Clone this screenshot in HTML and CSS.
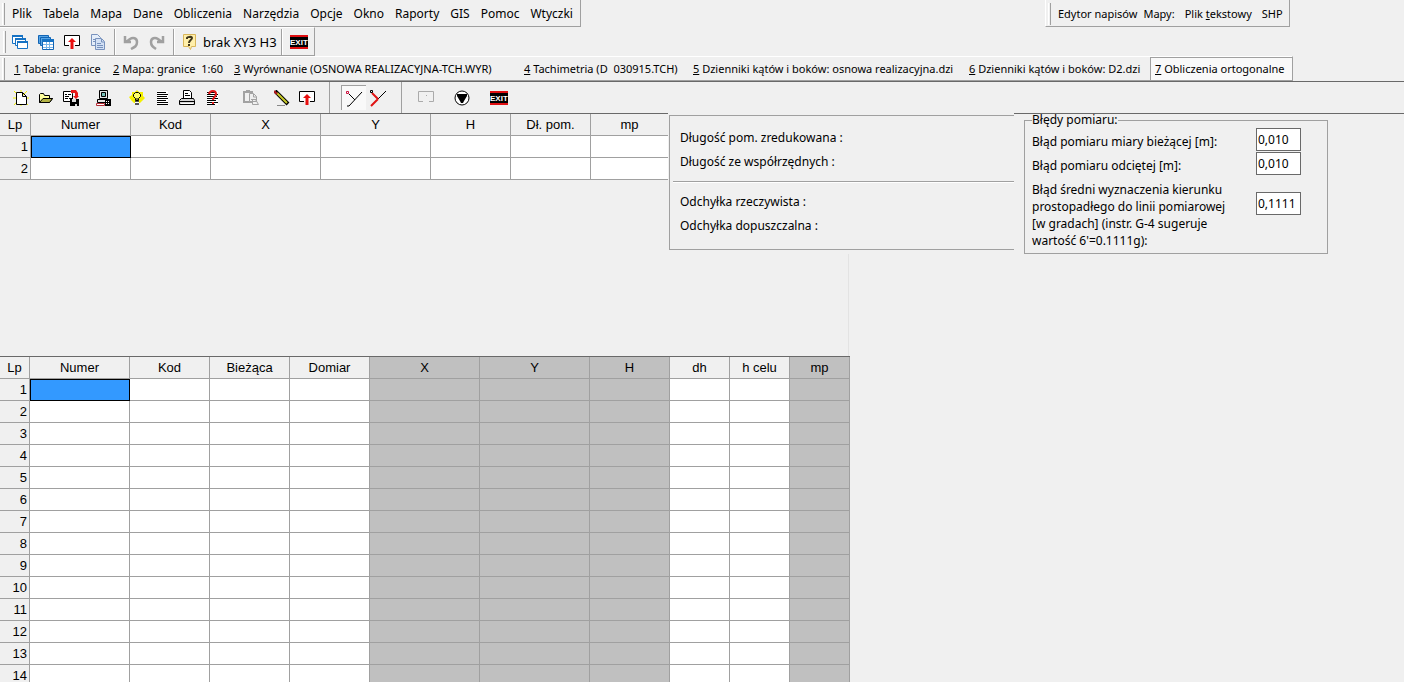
FILE: index.html
```html
<!DOCTYPE html>
<html lang="pl">
<head>
<meta charset="utf-8">
<title>Obliczenia ortogonalne</title>
<link rel="stylesheet" href="styles.css">
</head>
<body>
<svg class="defs" aria-hidden="true">
  <defs>
    <symbol id="exit" viewBox="0 0 18 14">
      <path fill="#e00f12" d="M0 0h18v14H0z"/><path fill="#000" d="M0 2h18v10H0z"/>
      <text x="0" y="10" class="exit-text">EXIT</text>
    </symbol>
    <symbol id="up" viewBox="0 0 16 16">
      <path fill="#fff" d="M1 2h14v9H1z"/>
      <path fill="none" stroke="#000" d="M5 11.500H.5v-10h15v10H11"/>
      <path fill="#e81010" d="M8 4l4 4H9.500v7h-3V8H4z"/>
    </symbol>
  </defs>
</svg>
<header>
  <div class="row">
    <nav class="bar menu">
      <i class="grip"></i>
      <button>Plik</button><button>Tabela</button><button>Mapa</button><button>Dane</button><button>Obliczenia</button><button>Narzędzia</button><button>Opcje</button><button>Okno</button><button>Raporty</button><button>GIS</button><button>Pomoc</button><button>Wtyczki</button>
    </nav>
    <div class="bar captions">
      <i class="grip"></i>
      <span>Edytor napisów</span><span>Mapy:</span><button>Plik <u>t</u>ekstowy</button><button>SHP</button>
    </div>
  </div>
  <div class="row">
    <div class="bar tools">
      <i class="grip"></i>
      <button aria-label="Okna"><svg viewBox="0 0 16 16"><g fill="#fff" stroke="#1672c4"><path d="M.5 1.500h10v8H.5z"/><path d="M3.500 4.500h10v7h-10z"/><path d="M5.500 7.500h10v7h-10z"/></g><path stroke="#1672c4" stroke-width="2" d="M0 2h11M3 5h11M5 8h11"/></svg></button>
      <button aria-label="Tabele"><svg viewBox="0 0 16 16"><g fill="#56a5e6" stroke="#1264b4"><path d="M.5 1.500h10v8H.5z"/><path d="M2.500 3.500h10v8h-10z"/><path fill="#fff" d="M4.500 5.500h11v10h-11z"/></g><path fill="#1672c4" d="M4 5h12v3H4z"/><path stroke="#78b4e8" d="M5 10.500h10M5 13.500h10M8.500 8v7M11.500 8v7"/></svg></button>
      <button aria-label="Wyślij"><svg><use href="#up"/></svg></button>
      <button aria-label="Kopiuj"><svg viewBox="0 0 16 16"><g fill="#e4edf9" stroke="#7892bd"><path d="M1.500.5h6l3 3v8h-9z"/><path fill="#d3e1f5" d="M5.500 4.500h6l3 3v8h-9z"/></g><path fill="none" stroke="#7892bd" d="M11.500 5v3H14M7 9.500h4M7 11.500h6M7 13.500h6M3 5.500h2M3 7.500h2"/></svg></button>
      <i class="sep"></i>
      <button aria-label="Cofnij"><svg viewBox="0 0 16 16"><path fill="none" stroke="#a0a0a0" stroke-width="2.500" d="M2 2v6h6M3 8l4-3c3-2 7-1 7 3s-2 5-6 7"/></svg></button>
      <button aria-label="Ponów"><svg viewBox="0 0 16 16"><path fill="none" stroke="#a0a0a0" stroke-width="2.500" d="M14 2v6H8M13 8L9 5C6 3 2 4 2 8s2 5 5 7"/></svg></button>
      <i class="sep"></i>
      <button class="status"><svg viewBox="0 0 16 16"><path fill="#ffefaa" stroke="#d9b65a" d="M1.500.5h12v12h-4l-1 3-2-3h-5z"/><path fill="none" stroke="#40371c" stroke-width="2" d="M5 5V4c0-1 5-2 5 0 0 2-3 2-3 5M7 10v2"/></svg><span>brak XY3 H3</span></button>
      <i class="sep"></i>
      <button aria-label="Zamknij"><svg class="exit"><use href="#exit"/></svg></button>
    </div>
  </div>
  <nav class="bar tabs">
    <i class="grip"></i>
    <a href="#"><u>1</u> Tabela: granice</a><a href="#"><u>2</u> Mapa: granice&nbsp; 1:60</a><a href="#"><u>3</u> Wyrównanie (OSNOWA REALIZACYJNA-TCH.WYR)</a><a href="#"><u>4</u> Tachimetria (D&nbsp; 030915.TCH)</a><a href="#"><u>5</u> Dzienniki kątów i boków: osnowa realizacyjna.dzi</a><a href="#"><u>6</u> Dzienniki kątów i boków: D2.dzi</a><a href="#" class="active" aria-current="page"><u>7</u> Obliczenia ortogonalne</a>
  </nav>
</header>
<main>
  <div class="toolbar">
    <div class="group">
      <button aria-label="Nowy"><svg viewBox="0 0 16 16"><path stroke="#f4f000" d="M1 1l14 14M14 1L1 15M8 0v16M0 8h16"/><path fill="#fff" stroke="#000" d="M3.500 2.500h6l4 4v8h-10zM9.500 2.500v4h4"/></svg></button>
      <button aria-label="Otwórz"><svg viewBox="0 0 16 16"><path fill="#ffff9c" stroke="#000" d="M1.500 12.500v-8l1-1h3l1 2h5v3h3l-3 4z"/><path fill="#b2b244" stroke="#000" d="M5 8.500h9.500l-3 4h-10z"/></svg></button>
      <button aria-label="Zapisz"><svg viewBox="0 0 16 16"><path fill="#fff" stroke="#000" d="M.5 1.500h7l2 2v8h-9z"/><path stroke="#000" d="M2 4.500h2M5 4.500h3M2 6.500h4M2 8.500h3M6 8.500h3"/><path fill="#e81818" d="M8 0h5l2 3v3h1l-3 3-3-3h2V3H8z"/><path d="M7 9h9v7H7z"/><path fill="#ddd" d="M9 9h4v3H9zM12 14h2v2h-2z"/></svg></button>
    </div>
    <div class="group">
      <button aria-label="Transmisja"><svg viewBox="0 0 16 16"><path fill="#e6e6e6" stroke="#000" d="M3.500.5h8v8h-8zM1.500 9.500h13v3h-13z"/><path fill="#77c1b8" stroke="#000" d="M5.500 2.500h4v4h-4z"/><path fill="#fff" stroke="#b52c36" d="M.5 13.500h8v2h-8z"/><path d="M9 9h6v7H9z"/><path stroke="#fff" stroke-dasharray="1 1" d="M10 11.500h4M10 13.500h4"/></svg></button>
    </div>
    <div class="group wide">
      <button aria-label="Podpowiedź"><svg viewBox="0 0 16 16"><path fill="#f4f000" d="M8 0l2 2 4 0 0 4 2 2-3 3-2 2H5L2 10 0 7l3-2V2h3z"/><path fill="#ff6" stroke="#000" d="M6.500 10.500v-2l-2-2v-2l2-2h3l2 2v2l-2 2v2zM8 8v3"/><path fill="#555" d="M6 11h4v4H6z"/><path stroke="#fff" d="M6 12.500h4"/></svg></button>
      <button aria-label="Lista"><svg viewBox="0 0 16 16"><path fill="#fff" d="M3 1h11v14H3z"/><path stroke="#000" d="M3 2.500h9M3 4.500h11M3 6.500h10M3 8.500h11M3 10.500h9M3 12.500h11M3 14.500h11"/></svg></button>
      <button aria-label="Drukuj"><svg viewBox="0 0 16 16"><path fill="#fff" stroke="#000" d="M4.500 8.500v-8h6l2 2v6zM6 3.500h3M6 5.500h5"/><path fill="#d5d5d5" stroke="#000" d="M2.500 8.500h12l1 2v4H.5v-4zM1 11.500h14"/><path stroke="#fff" d="M2 13.500h12"/></svg></button>
      <button aria-label="Pomoc"><svg viewBox="0 0 16 16"><path fill="#fff" d="M3 1h11v14H3z"/><path stroke="#000" d="M3 2.500h9M3 4.500h11M3 6.500h10M3 8.500h11M3 10.500h9M3 12.500h11M3 14.500h8"/><path fill="none" stroke="#e41818" stroke-width="2" d="M5 4c1-4 7-4 7 0 0 3-3 3-3 6M9 12v2"/></svg></button>
    </div>
    <div class="group narrow">
      <button aria-label="Wklej" disabled><svg viewBox="0 0 16 16"><path fill="none" stroke="#a2a2a2" stroke-width="2" d="M1 2h8v10H1zM3 1h4"/><path fill="#eee" stroke="#a2a2a2" d="M6.500 3.500h4l3 3v5h-7z"/><path fill="none" stroke="#a2a2a2" d="M10.500 4v3h3M9.500 14.500v-5h3l3 5h-6M8 9.500h5"/></svg></button>
    </div>
    <div class="group">
      <button aria-label="Edycja"><svg viewBox="0 0 16 16"><path stroke="#000" stroke-width="4" d="M1 1l13 13"/><path stroke="#c8cb29" stroke-width="2" d="M3 3l10 10"/><path stroke="#b31c22" stroke-width="2" d="M0 1l3 3"/><path stroke="#888" d="M3 15.500h8"/></svg></button>
      <button aria-label="Wyślij"><svg><use href="#up"/></svg></button>
    </div>
    <i class="divider"></i>
    <div class="pair">
      <button class="pressed" aria-label="Rzut prostokątny"><svg viewBox="0 0 18 18"><path fill="none" stroke="#000" d="M4 5l6 6M2 17h2L17 3"/><path fill="#fff" stroke="#cc1440" d="M1.500 2.500h2v2h-2z"/></svg></button>
      <button aria-label="Tyczenie"><svg viewBox="0 0 18 18"><path stroke="#000" d="M9 10l8-8"/><path fill="none" stroke="#e01414" stroke-width="2" d="M3 4l6 6M9 10l-7 7"/><path fill="#fff" stroke="#000" d="M1.500 1.500h2v2h-2z"/></svg></button>
    </div>
    <i class="divider"></i>
    <div class="group last">
      <button aria-label="Ramka" disabled><svg viewBox="0 0 16 16"><path fill="none" stroke="#aaa" d="M5 11.500H.5v-10h15v10H11M8 5.500h1"/></svg></button>
      <button aria-label="Oblicz"><svg viewBox="0 0 16 16"><circle cx="8" cy="8" r="7" fill="#fff" stroke="#000"/><path d="M3 4h10v2l-3 5-1 2H7l-1-2-3-5z"/></svg></button>
      <button aria-label="Zamknij"><svg class="exit"><use href="#exit"/></svg></button>
    </div>
  </div>
  <section class="base">
    <table class="grid base-grid">
      <colgroup><col class="w31"><col class="w100"><col class="w80"><col class="w110"><col class="w110"><col class="w80"><col class="w80"><col class="w77"></colgroup>
      <thead><tr><th>Lp</th><th>Numer</th><th>Kod</th><th>X</th><th>Y</th><th>H</th><th>Dł. pom.</th><th>mp</th></tr></thead>
      <tbody>
        <tr><th>1</th><td class="selected"></td><td></td><td></td><td></td><td></td><td></td><td></td></tr>
        <tr><th>2</th><td></td><td></td><td></td><td></td><td></td><td></td><td></td></tr>
      </tbody>
    </table>
    <div class="results-wrap">
      <div class="results">
        <p>Długość pom. zredukowana :</p>
        <p>Długość ze współrzędnych :</p>
        <hr>
        <p>Odchyłka rzeczywista :</p>
        <p>Odchyłka dopuszczalna :</p>
      </div>
    </div>
    <fieldset class="errors">
      <legend>Błędy pomiaru:</legend>
      <label for="run">Błąd pomiaru miary bieżącej [m]:</label><input id="run" value="0,010">
      <label for="offset">Błąd pomiaru odciętej [m]:</label><input id="offset" value="0,010">
      <label for="angle" class="long">Błąd średni wyznaczenia kierunku prostopadłego do linii pomiarowej [w gradach] (instr. G-4 sugeruje wartość 6'=0.1111g):</label><input id="angle" value="0,1111">
    </fieldset>
  </section>
  <div class="pane-gap"></div>
  <table class="grid points-grid">
    <colgroup><col class="w30"><col class="w100"><col class="w80"><col class="w80"><col class="w80"><col class="w110"><col class="w110"><col class="w80"><col class="w60"><col class="w60"><col class="w60"></colgroup>
    <thead><tr><th>Lp</th><th>Numer</th><th>Kod</th><th>Bieżąca</th><th>Domiar</th><th class="calc">X</th><th class="calc">Y</th><th class="calc">H</th><th>dh</th><th>h celu</th><th class="calc">mp</th></tr></thead>
    <tbody>
      <tr><th>1</th><td class="selected"></td><td></td><td></td><td></td><td></td><td></td><td></td><td></td><td></td><td></td></tr>
      <tr><th>2</th><td></td><td></td><td></td><td></td><td></td><td></td><td></td><td></td><td></td><td></td></tr>
      <tr><th>3</th><td></td><td></td><td></td><td></td><td></td><td></td><td></td><td></td><td></td><td></td></tr>
      <tr><th>4</th><td></td><td></td><td></td><td></td><td></td><td></td><td></td><td></td><td></td><td></td></tr>
      <tr><th>5</th><td></td><td></td><td></td><td></td><td></td><td></td><td></td><td></td><td></td><td></td></tr>
      <tr><th>6</th><td></td><td></td><td></td><td></td><td></td><td></td><td></td><td></td><td></td><td></td></tr>
      <tr><th>7</th><td></td><td></td><td></td><td></td><td></td><td></td><td></td><td></td><td></td><td></td></tr>
      <tr><th>8</th><td></td><td></td><td></td><td></td><td></td><td></td><td></td><td></td><td></td><td></td></tr>
      <tr><th>9</th><td></td><td></td><td></td><td></td><td></td><td></td><td></td><td></td><td></td><td></td></tr>
      <tr><th>10</th><td></td><td></td><td></td><td></td><td></td><td></td><td></td><td></td><td></td><td></td></tr>
      <tr><th>11</th><td></td><td></td><td></td><td></td><td></td><td></td><td></td><td></td><td></td><td></td></tr>
      <tr><th>12</th><td></td><td></td><td></td><td></td><td></td><td></td><td></td><td></td><td></td><td></td></tr>
      <tr><th>13</th><td></td><td></td><td></td><td></td><td></td><td></td><td></td><td></td><td></td><td></td></tr>
      <tr><th>14</th><td></td><td></td><td></td><td></td><td></td><td></td><td></td><td></td><td></td><td></td></tr>
    </tbody>
  </table>
</main>
</body>
</html>
```
FILE: styles.css
```css
* { box-sizing: border-box; }
body {
  margin: 0;
  height: 100vh;
  overflow: hidden;
  background: #f0f0f0;
  color: #000;
  font: 12px/16px "Noto Sans", sans-serif;
}
button, input { font: inherit; color: inherit; }
button { border: 0; padding: 0; background: none; white-space: nowrap; }
button svg { display: block; width: 16px; height: 16px; }
button svg.exit { width: 18px; height: 14px; }
.defs { position: absolute; width: 0; height: 0; }
.exit-text { font: bold 8px "Liberation Sans", sans-serif; fill: #fff; }

.row { display: flex; }
.bar {
  display: flex;
  align-items: center;
  width: max-content;
  border-right: 1px solid #a0a0a0;
  border-bottom: 1px solid #a0a0a0;
}
.grip {
  flex: none;
  width: 3px;
  height: 22px;
  margin-left: 2px;
  border-left: 1px solid #fff;
  border-right: 1px solid #a0a0a0;
}
.menu { height: 27px; gap: 11px; padding: 2px 7px 0 0; }
.menu .grip { margin-right: -4px; }
.captions { height: 27px; gap: 10px; margin-left: 464px; padding: 2px 6px 0 0; border-left: 1px solid #fff; font-size: 11px; }
.captions .grip { margin-right: -3px; }
.captions span + span { margin-left: -4px; }

.tools { height: 29px; gap: 10px; padding-right: 6px; border-top: 1px solid #fff; }
.tools .grip { margin: 0 -4px 0 3px; }
.sep { width: 2px; height: 26px; margin: 0 -3px 0 -2px; border-left: 1px solid #a0a0a0; border-right: 1px solid #fff; }
.status { display: flex; align-items: center; gap: 5px; margin-right: -4px; font-size: 13px; }

.tabs {
  display: grid;
  grid-template-columns: 14px 99px 121px 290px 169px 276px 181px auto;
  height: 25px;
  border-top: 1px solid #fff;
  font-size: 11px;
}
.tabs a { color: inherit; text-decoration: none; white-space: nowrap; }
.tabs .active { padding: 3px 7px 3px 4px; background: #f9f9f9; border-top: 1px solid #a0a0a0; border-left: 1px solid #a0a0a0; }

.toolbar { display: flex; align-items: center; height: 32px; padding-left: 13px; border-top: 1px solid #696969; }
.group { display: flex; align-items: center; gap: 9px; margin-right: 17px; }
.group.wide { margin-right: 23px; }
.group.narrow { margin-right: 15px; }
.divider { align-self: stretch; width: 1px; background: #a0a0a0; }
.toolbar .divider { margin-left: -3px; }
.pair { display: flex; margin: 0 14px 0 11px; }
.pair button { padding: 3px; }
.pair svg { width: 18px; height: 18px; }
.pair .pressed { background: #f9f9f9; border-top: 1px solid #a0a0a0; border-left: 1px solid #a0a0a0; }
.group.last { gap: 20px; margin-left: 16px; }

.base { display: flex; align-items: flex-start; border-top: 1px solid #696969; }
.grid { flex: none; table-layout: fixed; width: 0; border-spacing: 0; font: 13px/16px "Liberation Sans", sans-serif; }
.grid th, .grid td { height: 22px; padding: 0 2px; border-right: 1px solid #a0a0a0; border-bottom: 1px solid #a0a0a0; font-weight: normal; }
.grid td { background: #fff; }
.grid tbody th { text-align: right; }
.grid td.selected { background: #39f; outline: 1px solid #000; outline-offset: -1px; }
.base-grid tr > :last-child { border-right: 0; }
.w30 { width: 30px; }
.w31 { width: 31px; }
.w60 { width: 60px; }
.w77 { width: 77px; }
.w80 { width: 80px; }
.w100 { width: 100px; }
.w110 { width: 110px; }
.grid th.calc, .points-grid td:nth-child(6), .points-grid td:nth-child(7), .points-grid td:nth-child(8), .points-grid td:nth-child(11) { background: #c0c0c0; }
.points-grid { border-top: 1px solid #696969; }

.results-wrap { width: 346px; margin-top: -1px; padding: 2px 0 0 1px; background: #f0f0f0; }
.results { padding: 10px 0 11px 3px; border: 1px solid #a0a0a0; border-right: 0; }
.results p { margin: 0; padding-left: 7px; line-height: 24px; }
.results hr { margin: 7px 0; border: 0; border-top: 1px solid #a0a0a0; border-bottom: 1px solid #fff; }

.errors {
  display: grid;
  grid-template-columns: 224px 45px;
  align-items: center;
  width: 304px;
  margin: 0 0 0 10px;
  padding: 2px 0 4px 7px;
  border: 1px solid #a0a0a0;
}
.errors legend { padding: 0; line-height: 12px; }
.errors label { padding-top: 4px; }
.errors input { width: 45px; height: 23px; margin-bottom: 1px; padding: 0 1px; border: 1px solid #696969; background: #fff; }
.errors .long { width: 206px; margin-top: 5px; padding-top: 0; line-height: 17px; }
.errors .long + input { align-self: start; margin-top: 16px; }
.pane-gap { width: 849px; height: 102px; border-right: 1px solid #e3e3e3; }
```
